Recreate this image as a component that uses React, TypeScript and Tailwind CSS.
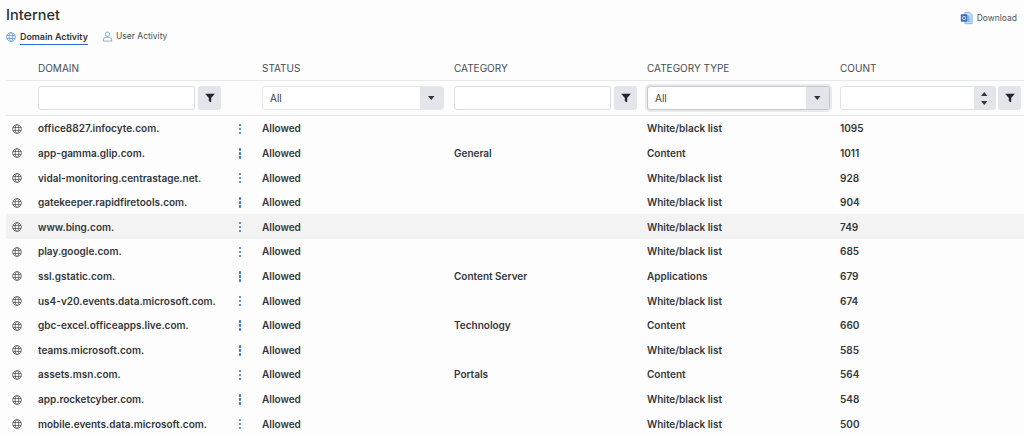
const rows = [
  { domain: "office8827.infocyte.com.", category: "", type: "White/black list", count: 1095 },
  { domain: "app-gamma.glip.com.", category: "General", type: "Content", count: 1011 },
  { domain: "vidal-monitoring.centrastage.net.", category: "", type: "White/black list", count: 928 },
  { domain: "gatekeeper.rapidfiretools.com.", category: "", type: "White/black list", count: 904 },
  { domain: "www.bing.com.", category: "", type: "White/black list", count: 749 },
  { domain: "play.google.com.", category: "", type: "White/black list", count: 685 },
  { domain: "ssl.gstatic.com.", category: "Content Server", type: "Applications", count: 679 },
  { domain: "us4-v20.events.data.microsoft.com.", category: "", type: "White/black list", count: 674 },
  { domain: "gbc-excel.officeapps.live.com.", category: "Technology", type: "Content", count: 660 },
  { domain: "teams.microsoft.com.", category: "", type: "White/black list", count: 585 },
  { domain: "assets.msn.com.", category: "Portals", type: "Content", count: 564 },
  { domain: "app.rocketcyber.com.", category: "", type: "White/black list", count: 548 },
  { domain: "mobile.events.data.microsoft.com.", category: "", type: "White/black list", count: 500 },
];

const cols = "grid grid-cols-[32px_224px_192px_193px_193px_184px]";

function Globe({ className }: { className?: string }) {
  return (
    <svg viewBox="0 0 24 24" fill="none" stroke="currentColor" strokeWidth="1.8" className={className}>
      <circle cx="12" cy="12" r="10.5" />
      <ellipse cx="12" cy="12" rx="4.5" ry="10.5" />
      <path d="M2.2 8.5h19.6M2.2 15.5h19.6" />
    </svg>
  );
}

function FunnelButton() {
  return (
    <button className="flex h-[24px] w-[23px] shrink-0 items-center justify-center rounded-[3px] bg-[#e2e5e9]">
      <svg viewBox="0 0 12 12" className="h-[10px] w-[10px] fill-[#23272b]">
        <path d="M0.2 1h11.6L7.4 6v5.2L4.6 10V6z" />
      </svg>
    </button>
  );
}

function TextFilter({ end }: { end: string }) {
  return (
    <div className={`flex items-center gap-[3px] ${end}`}>
      <div className="h-[24px] min-w-0 flex-1 rounded-[3px] border border-[#dcdfe3] bg-white" />
      <FunnelButton />
    </div>
  );
}

function SelectFilter({ focused }: { focused?: boolean }) {
  return (
    <div
      className={`mr-[10px] flex h-[24px] items-center overflow-hidden rounded-[3px] border bg-white ${
        focused ? "border-[#c4c8cd] shadow-[0_0_0_2px_#e8eaed]" : "border-[#e6e8eb]"
      }`}
    >
      <span className="flex-1 pl-[7px] text-[10px] text-[#3a3f45]">All</span>
      <span className="flex h-full w-[23px] items-center justify-center bg-[#e2e5e9]">
        <svg viewBox="0 0 8 5" className="h-[4px] w-[6.5px] fill-[#30353a]">
          <path d="M0 0h8L4 5z" />
        </svg>
      </span>
    </div>
  );
}

function NumberFilter() {
  return (
    <div className="flex items-center gap-[2px] pr-[3px]">
      <div className="flex h-[24px] min-w-0 flex-1 justify-end overflow-hidden rounded-[3px] border border-[#e0e3e6] bg-white">
        <span className="flex h-full w-[21px] flex-col items-center justify-center gap-[5px] bg-[#e2e5e9]">
          <svg viewBox="0 0 8 5" className="h-[4px] w-[6.5px] fill-[#30353a]">
            <path d="M0 5h8L4 0z" />
          </svg>
          <svg viewBox="0 0 8 5" className="h-[4px] w-[6.5px] fill-[#30353a]">
            <path d="M0 0h8L4 5z" />
          </svg>
        </span>
      </div>
      <FunnelButton />
    </div>
  );
}

export default function App() {
  return (
    <div className="h-[436px] w-[1024px] overflow-hidden bg-[#fdfdfd] pl-[6px] font-['Inter',sans-serif] text-[#34383d]">
      <div className="flex h-[27px] items-end justify-between">
        <h1 className="mb-[2px] text-[14.5px] leading-[20px] font-medium text-[#2a2e33]">Internet</h1>
        <button className="mr-[7px] mb-[2px] flex items-center gap-[4px] text-[8.5px] text-[#50555b]">
          <svg viewBox="0 0 16 16" className="h-[14px] w-[13px]">
            <path d="M6 1h6l3 3v11H6z" fill="#c9dcf5" stroke="#6f9fdc" strokeWidth="0.8" />
            <path d="M8 7h5M8 9.5h5M8 12h5M10.5 6v7" stroke="#6f9fdc" strokeWidth="0.8" />
            <rect x="1" y="3.5" width="8" height="9" rx="1" fill="#2f6fc4" />
            <circle cx="5" cy="8" r="2" fill="none" stroke="#fff" strokeWidth="1" />
          </svg>
          Download
        </button>
      </div>

      <div className="mt-[3px] flex h-[17px] items-start text-[8.9px]">
        <Globe className="mt-[2px] h-[10px] w-[10px] text-[#5b8fdc]" />
        <div className="ml-[4px] h-[15px] border-b-[1px] border-[#2f6fd6] leading-[13px] font-semibold text-[#30353a]">
          Domain Activity
        </div>
        <svg viewBox="0 0 12 12" fill="none" stroke="#6f9fe6" strokeWidth="0.9" className="mt-[1px] ml-[14px] h-[11px] w-[11px]">
          <circle cx="6" cy="3.5" r="2.4" />
          <path d="M1.5 11v-1.5a2.5 2.5 0 0 1 2.5-2.5h4a2.5 2.5 0 0 1 2.5 2.5V11z" />
        </svg>
        <div className="ml-[3px] text-[8.5px] leading-[13px] text-[#4b5056]">User Activity</div>
      </div>

      <div className={`${cols} mt-[8px] h-[26px] items-center border-b border-[#e6e8eb] pt-[2px] text-[10px] text-[#484d53]`}>
        <span />
        <span>DOMAIN</span>
        <span>STATUS</span>
        <span>CATEGORY</span>
        <span>CATEGORY TYPE</span>
        <span>COUNT</span>
      </div>

      <div className={`${cols} h-[35px] items-center border-b border-[#e6e8eb]`}>
        <span />
        <TextFilter end="pr-[41px]" />
        <SelectFilter />
        <TextFilter end="pr-[10px]" />
        <SelectFilter focused />
        <NumberFilter />
      </div>

      {rows.map((row) => (
        <div
          key={row.domain}
          className={`${cols} h-[24.62px] items-center pt-[1px] text-[10px] font-semibold text-[#33373c] ${
            row.domain === "www.bing.com." ? "bg-[#f3f3f3]" : ""
          }`}
        >
          <span className="pl-[6px]">
            <Globe className="h-[10px] w-[10px] text-[#4a4f55]" />
          </span>
          <span className="flex items-center justify-between pr-[21px]">
            <span className="truncate">{row.domain}</span>
            <span className="flex flex-col gap-[1.5px]">
              <span className="h-[2.5px] w-[2.5px] rounded-full bg-[#2f6fd6]" />
              <span className="h-[2.5px] w-[2.5px] rounded-full bg-[#2f6fd6]" />
              <span className="h-[2.5px] w-[2.5px] rounded-full bg-[#2f6fd6]" />
            </span>
          </span>
          <span>Allowed</span>
          <span>{row.category}</span>
          <span>{row.type}</span>
          <span>{row.count}</span>
        </div>
      ))}
    </div>
  );
}
